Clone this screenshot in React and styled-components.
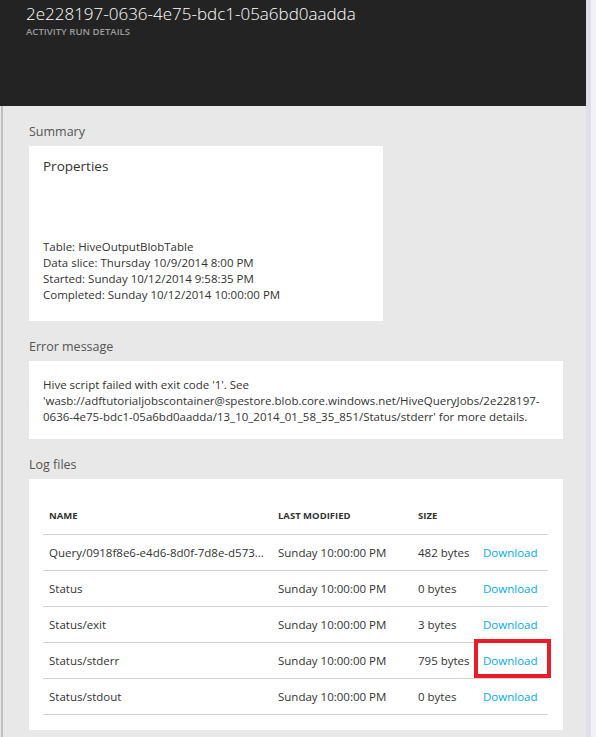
import React from 'react'
import styled, { createGlobalStyle } from 'styled-components'

const GlobalStyle = createGlobalStyle`
  html, body {
    margin: 0;
    padding: 0;
    background: #e8e8e8;
  }
  body {
    font-family: "Open Sans", "Liberation Sans", sans-serif;
    color: #333;
  }
`

const logs = [
  { name: 'Query/0918f8e6-e4d6-8d0f-7d8e-d573...', modified: 'Sunday 10:00:00 PM', size: '482 bytes' },
  { name: 'Status', modified: 'Sunday 10:00:00 PM', size: '0 bytes' },
  { name: 'Status/exit', modified: 'Sunday 10:00:00 PM', size: '3 bytes' },
  { name: 'Status/stderr', modified: 'Sunday 10:00:00 PM', size: '795 bytes', marked: true },
  { name: 'Status/stdout', modified: 'Sunday 10:00:00 PM', size: '0 bytes' },
]

function App() {
  return (
    <>
      <GlobalStyle />
      <Page>
        <Blade>
          <Header>
            <Title>2e228197-0636-4e75-bdc1-05a6bd0aadda</Title>
            <Subtitle>ACTIVITY RUN DETAILS</Subtitle>
          </Header>
          <Content>
            <Section>
              <Label>Summary</Label>
              <SummaryCard>
                <CardTitle>Properties</CardTitle>
                <PropList>
                  <div>Table: HiveOutputBlobTable</div>
                  <div>Data slice: Thursday 10/9/2014 8:00 PM</div>
                  <div>Started: Sunday 10/12/2014 9:58:35 PM</div>
                  <div>Completed: Sunday 10/12/2014 10:00:00 PM</div>
                </PropList>
              </SummaryCard>
            </Section>

            <Section>
              <Label>Error message</Label>
              <ErrorCard>
                Hive script failed with exit code '1'. See<br />
                'wasb://adftutorialjobscontainer@spestore.blob.core.windows.net/HiveQueryJobs/2e228197-<br />
                0636-4e75-bdc1-05a6bd0aadda/13_10_2014_01_58_35_851/Status/stderr' for more details.
              </ErrorCard>
            </Section>

            <Section>
              <Label>Log files</Label>
              <LogCard>
                <HeadRow>
                  <HeadCell>Name</HeadCell>
                  <HeadCell>Last modified</HeadCell>
                  <HeadCell>Size</HeadCell>
                  <HeadCell />
                </HeadRow>
                {logs.map((l) => (
                  <Row key={l.name}>
                    <Cell>{l.name}</Cell>
                    <Cell>{l.modified}</Cell>
                    <Cell>{l.size}</Cell>
                    <Cell>
                      <DownloadLink href="#d">Download</DownloadLink>
                      {l.marked && <Highlight />}
                    </Cell>
                  </Row>
                ))}
              </LogCard>
            </Section>
          </Content>
        </Blade>
        <Edge $color="#dfdfe7" />
        <Edge $color="#f1f1f8" />
      </Page>
    </>
  )
}

export default App

const Page = styled.div`
  display: flex;
  min-height: 100vh;
`

const Blade = styled.div`
  width: 586px;
  display: flex;
  flex-direction: column;
`

const Edge = styled.div`
  width: 5px;
  background: ${(p) => p.$color};
`

const Header = styled.header`
  height: 106px;
  box-sizing: border-box;
  background: #232323;
  padding: 2px 0 0 26px;
`

const Title = styled.div`
  color: #fff;
  font-size: 17px;
  font-weight: 300;
  line-height: 23px;
`

const Subtitle = styled.div`
  color: #9b9b9b;
  font-size: 9.6px;
  font-weight: 600;
  line-height: 13px;
`

const Content = styled.main`
  flex: 1;
  background: #e8e8e8;
  box-shadow: inset 1px 0 0 #e8e8e8, inset 3px 0 0 #bfbfbf;
  padding: 17px 23px 8px 29px;
  display: flex;
  flex-direction: column;
  gap: 17px;
`

const Section = styled.section`
  display: flex;
  flex-direction: column;
  align-items: flex-start;
`

const Label = styled.div`
  font-size: 12.5px;
  color: #555;
  line-height: 18px;
  margin-bottom: 5px;
`

const Card = styled.div`
  background: #fff;
  box-sizing: border-box;
  font-size: 11.5px;
  color: #333;
`

const SummaryCard = styled(Card)`
  width: 354px;
  height: 175px;
  padding: 11px 14px 0;
`

const CardTitle = styled.div`
  font-size: 13.5px;
  line-height: 18px;
  color: #333;
`

const PropList = styled.div`
  margin-top: 64px;
  line-height: 16px;
`

const ErrorCard = styled(Card)`
  width: 534px;
  padding: 16px 14px 14px;
  line-height: 16px;
  white-space: nowrap;
`

const LogCard = styled(Card)`
  width: 534px;
  padding: 17px 15px 15px 14px;
`

const HeadRow = styled.div`
  display: grid;
  grid-template-columns: 229px 140px 65px 71px;
  box-sizing: border-box;
  height: 39px;
  align-items: center;
  border-bottom: 1px solid #d4d4d4;
`

const HeadCell = styled.div`
  padding-left: 6px;
  font-size: 9.5px;
  font-weight: 700;
  text-transform: uppercase;
  color: #333;
`

const Row = styled(HeadRow)`
  height: 36px;
`

const Cell = styled.div`
  position: relative;
  padding-left: 6px;
  white-space: nowrap;
  height: 100%;
  display: flex;
  align-items: center;
`

const DownloadLink = styled.a`
  color: #00abec;
  text-decoration: none;
`

const Highlight = styled.span`
  position: absolute;
  top: -4px;
  left: -3px;
  right: -3px;
  bottom: 0;
  border: 4px solid #ea1c2a;
  pointer-events: none;
`
